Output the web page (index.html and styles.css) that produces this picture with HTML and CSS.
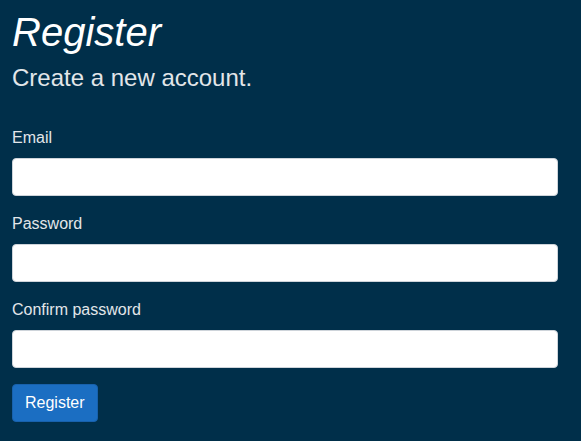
FILE: index.html
```html
<!DOCTYPE html>
<html lang="en">
<head>
<meta charset="utf-8">
<title>Register</title>
<link rel="stylesheet" href="styles.css">
</head>
<body>
<main class="page">
  <h1 class="title">Register</h1>
  <h4 class="subtitle">Create a new account.</h4>
  <form class="form">
    <div class="group">
      <label class="label" for="email">Email</label>
      <input class="input" id="email" type="email">
    </div>
    <div class="group">
      <label class="label" for="pw">Password</label>
      <input class="input" id="pw" type="password">
    </div>
    <div class="group">
      <label class="label" for="cpw">Confirm password</label>
      <input class="input" id="cpw" type="password">
    </div>
    <button class="btn" type="button">Register</button>
  </form>
</main>
</body>
</html>
```
FILE: styles.css
```css
html, body {
  margin: 0;
  padding: 0;
  background: #002f4a;
  height: 100%;
}
body {
  font-family: "Liberation Sans", Arial, sans-serif;
  color: #e2e6e9;
  font-size: 16px;
  line-height: 1.5;
}
.page {
  padding: 8px 12px 0 12px;
}
.title {
  margin: 0 0 8px 0;
  font-size: 40px;
  font-weight: 400;
  font-style: italic;
  line-height: 1.2;
  color: #ffffff;
}
.subtitle {
  margin: 0 0 33px 0;
  font-size: 24px;
  font-weight: 400;
  line-height: 1.2;
  color: #e2e6e9;
}
.form {
  width: 546px;
}
.group {
  display: flex;
  flex-direction: column;
  margin-bottom: 16px;
}
.label {
  display: block;
  margin-bottom: 8px;
  line-height: 24px;
}
.input {
  box-sizing: border-box;
  height: 38px;
  width: 100%;
  padding: 6px 12px;
  font: inherit;
  border: 1px solid #ced4da;
  border-radius: 4px;
  background: #fff;
  margin: 0;
}
.btn {
  box-sizing: border-box;
  height: 38px;
  padding: 6px 12px;
  font: inherit;
  line-height: 24px;
  color: #fff;
  background: #1b6ec2;
  border: 1px solid #1861ac;
  border-radius: 4px;
  cursor: pointer;
}
```
